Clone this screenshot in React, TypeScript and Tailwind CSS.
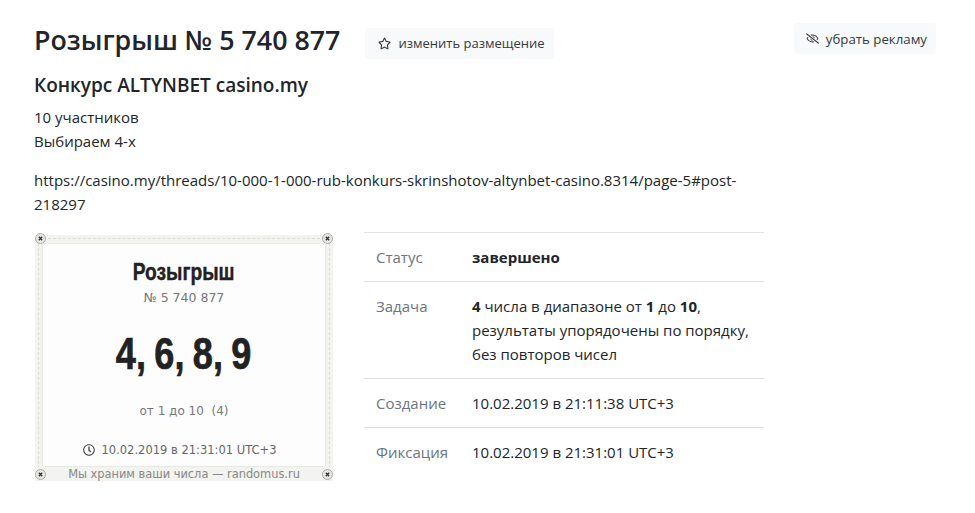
import { FaRegClock, FaRegEyeSlash, FaRegStar } from 'react-icons/fa';

function Screw() {
  return (
    <span className="flex w-[11px] h-[11px] items-center justify-center rounded-full border border-[#aaa] bg-[#e8e8e4] text-[#333]">
      <svg width="5" height="5" viewBox="0 0 6 6">
        <path d="M1 1l4 4M5 1L1 5" stroke="currentColor" strokeWidth="1.6" />
      </svg>
    </span>
  );
}

function Ticket() {
  return (
    <div className="relative ml-[1px] w-[298px] h-[246px] bg-[#f3f3ef] pt-[8px] px-[7px] shrink-0 font-['DejaVu_Sans',sans-serif]">
      <div className="absolute left-[3px] right-[3px] top-[3px] bottom-[7px] border border-dashed border-[#dcdcd6]" />
      <div className="absolute left-0 -top-[2px]"><Screw /></div>
      <div className="absolute right-0 -top-[2px]"><Screw /></div>

      <div className="relative h-[224px] bg-[#fdfdfd] border border-[#e8e8e4] flex flex-col items-center">
        <div className="mt-[13px] h-[30px] text-[24px] leading-[30px] font-bold text-[#222] scale-x-[0.8] [-webkit-text-stroke:0.4px_#222] font-['Liberation_Sans',sans-serif]">
          Розыгрыш
        </div>
        <div className="mt-[3px] text-[12.5px] leading-[16px] text-[#777]">№ 5 740 877</div>
        <div className="mt-[21px] h-[54px] text-[44px] leading-[54px] font-bold text-[#222] scale-x-[0.82] [-webkit-text-stroke:0.7px_#222] [word-spacing:-2px] whitespace-nowrap font-['Liberation_Sans',sans-serif]">
          4, 6, 8, 9
        </div>
        <div className="mt-[22px] text-[12px] leading-[16px] text-[#777] whitespace-pre">от 1 до 10  (4)</div>
        <div className="mt-[23px] mr-[9px] flex items-center gap-[7px] text-[11.5px] leading-[16px] text-[#666]">
          <FaRegClock size={12} className="text-[#444]" />
          10.02.2019 в 21:31:01 UTC+3
        </div>
      </div>
      <div className="absolute left-0 right-0 bottom-0 h-[14px] bg-[#f3f3ef] text-center text-[11.4px] leading-[14px] text-[#888]">
        Мы храним ваши числа — randomus.ru
      </div>
      <div className="absolute left-0 bottom-[1px]"><Screw /></div>
      <div className="absolute right-0 bottom-[1px]"><Screw /></div>
    </div>
  );
}

function Row({ label, children }: { label: string; children: React.ReactNode }) {
  return (
    <div className="flex border-b border-[#dee2e6] pl-[12px] py-[12px]">
      <div className="w-[96px] shrink-0 text-[#6c757d]">{label}</div>
      <div className="flex-1">{children}</div>
    </div>
  );
}

export default function App() {
  return (
    <div className="relative min-h-[513px] bg-white text-[#212529] font-['Open_Sans',sans-serif] text-[15px] leading-[24px] px-[34px] pt-[21px]">
      <button className="absolute right-[39px] top-[23px] flex h-[31px] items-center gap-[7px] rounded bg-[#f8f9fa] pl-[12px] pr-[9px] text-[13.25px] text-[#343a40]">
        <FaRegEyeSlash size={13} />
        убрать рекламу
      </button>

      <div className="w-[730px]">
        <div className="flex items-center">
          <h1 className="text-[26.8px] leading-[38px] font-semibold">Розыгрыш № 5 740 877</h1>
          <button className="ml-[25px] mt-[6px] flex h-[31px] items-center gap-[7px] rounded bg-[#f8f9fa] pl-[13px] pr-[9px] text-[13px] text-[#343a40]">
            <FaRegStar size={13} />
            изменить размещение
          </button>
        </div>
        <h2 className="mt-[13px] text-[19px] leading-[26px] font-semibold">Конкурс ALTYNBET casino.my</h2>
        <p className="mt-[7px]">10 участников<br />Выбираем 4-х</p>
        <p className="mt-[15px]">
          https://casino.my/threads/10-000-1-000-rub-konkurs-skrinshotov-altynbet-casino.8314/page-5#post-218297
        </p>

        <div className="mt-[19px] flex gap-[31px]">
          <Ticket />
          <div className="w-[400px] -mt-[3px] border-t border-[#dee2e6] self-start">
            <Row label="Статус"><b className="font-bold">завершено</b></Row>
            <Row label="Задача">
              <b className="font-bold">4</b> числа в диапазоне от <b className="font-bold">1</b> до <b className="font-bold">10</b>,<br />
              результаты упорядочены по порядку,<br />
              без повторов чисел
            </Row>
            <Row label="Создание">10.02.2019 в 21:11:38 UTC+3</Row>
            <div className="flex pl-[12px] py-[12px]">
              <div className="w-[96px] shrink-0 text-[#6c757d]">Фиксация</div>
              <div>10.02.2019 в 21:31:01 UTC+3</div>
            </div>
          </div>
        </div>
      </div>
    </div>
  );
}
